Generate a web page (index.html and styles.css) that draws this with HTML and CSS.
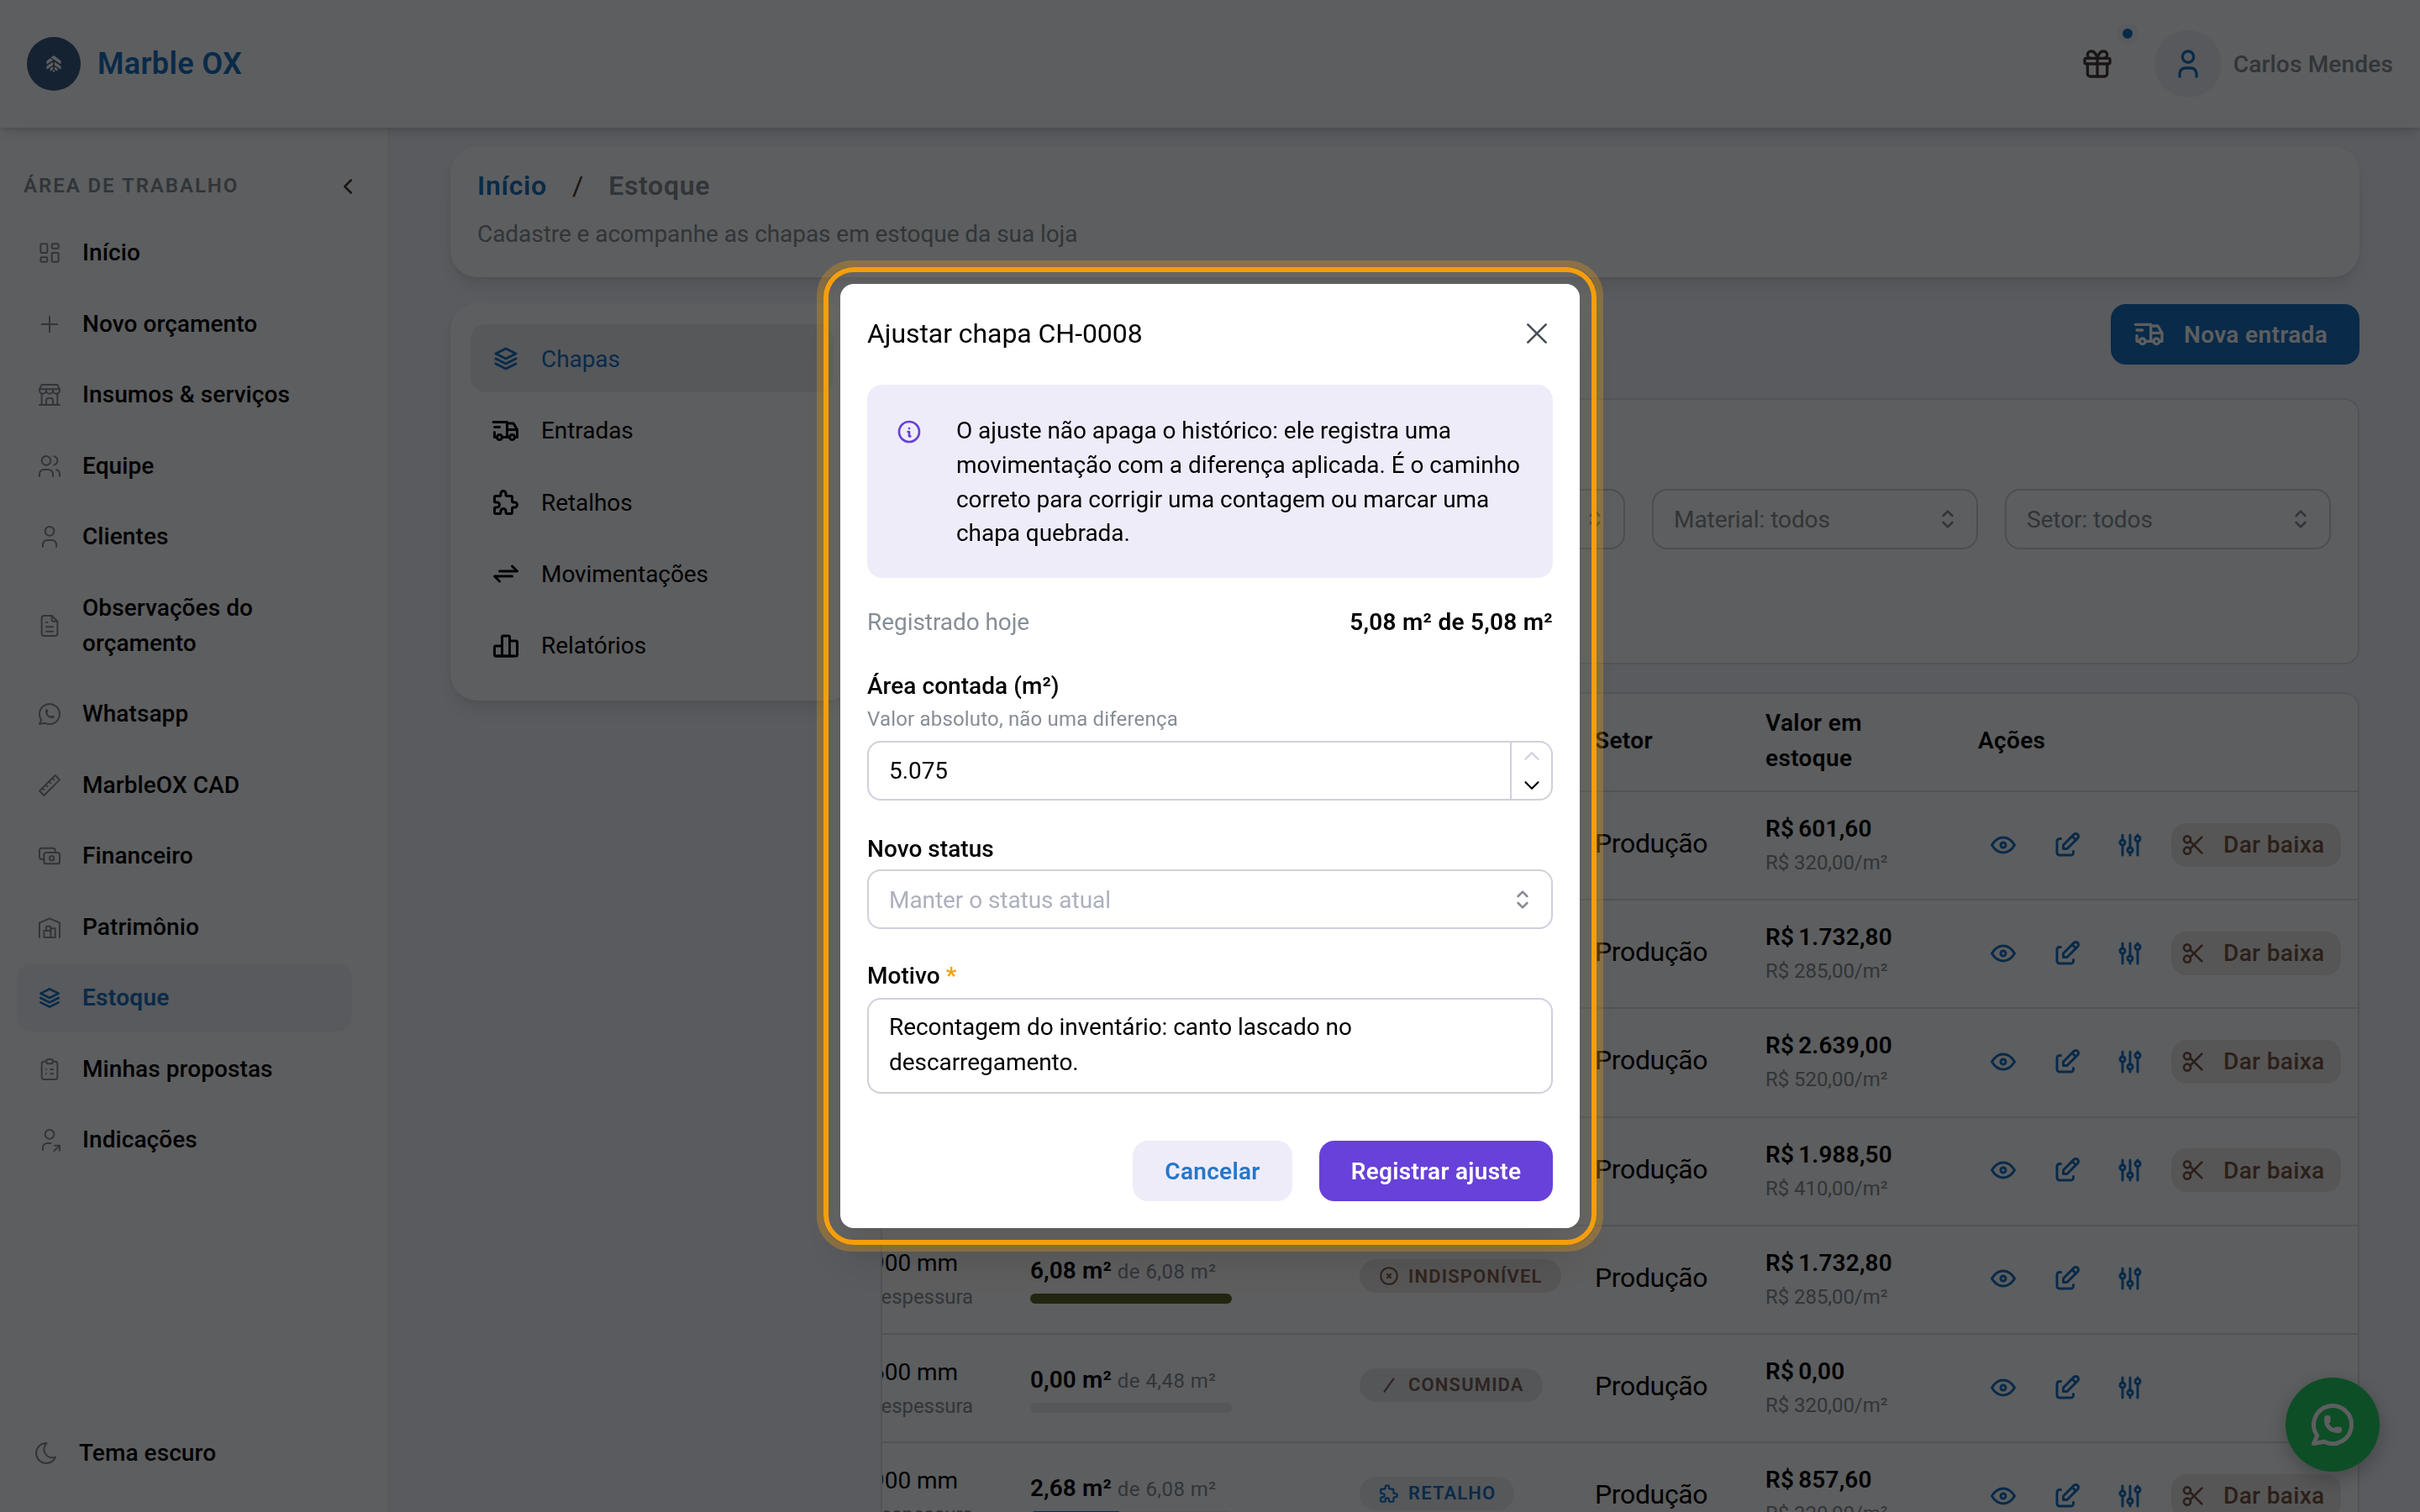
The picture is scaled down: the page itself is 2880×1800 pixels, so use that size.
FILE: index.html
```html
<!DOCTYPE html>
<html lang="pt-BR">
<head>
    <meta charset="UTF-8">
    <meta name="viewport" content="width=device-width, initial-scale=1.0">
    <title>Estoque - Marble OX</title>
    <link rel="stylesheet" href="styles.css">
</head>
<body>
    <!-- Icon set -->
    <svg class="sprite" aria-hidden="true">
        <symbol id="i-dashboard" viewBox="0 0 24 24"><path d="M5 4h4a1 1 0 0 1 1 1v6a1 1 0 0 1 -1 1h-4a1 1 0 0 1 -1 -1v-6a1 1 0 0 1 1 -1"/><path d="M5 16h4a1 1 0 0 1 1 1v2a1 1 0 0 1 -1 1h-4a1 1 0 0 1 -1 -1v-2a1 1 0 0 1 1 -1"/><path d="M15 12h4a1 1 0 0 1 1 1v6a1 1 0 0 1 -1 1h-4a1 1 0 0 1 -1 -1v-6a1 1 0 0 1 1 -1"/><path d="M15 4h4a1 1 0 0 1 1 1v2a1 1 0 0 1 -1 1h-4a1 1 0 0 1 -1 -1v-2a1 1 0 0 1 1 -1"/></symbol>
        <symbol id="i-plus" viewBox="0 0 24 24"><path d="M12 5v14M5 12h14"/></symbol>
        <symbol id="i-store" viewBox="0 0 24 24"><path d="M3 21h18"/><path d="M3 7v1a3 3 0 0 0 6 0v-1m0 1a3 3 0 0 0 6 0v-1m0 1a3 3 0 0 0 6 0v-1h-18l2 -4h14l2 4"/><path d="M5 21v-10.15M19 21v-10.15"/><path d="M9 21v-4a2 2 0 0 1 2 -2h2a2 2 0 0 1 2 2v4"/></symbol>
        <symbol id="i-users" viewBox="0 0 24 24"><path d="M5 7a4 4 0 1 0 8 0a4 4 0 1 0 -8 0"/><path d="M3 21v-2a4 4 0 0 1 4 -4h4a4 4 0 0 1 4 4v2"/><path d="M16 3.13a4 4 0 0 1 0 7.75"/><path d="M21 21v-2a4 4 0 0 0 -3 -3.85"/></symbol>
        <symbol id="i-user" viewBox="0 0 24 24"><path d="M8 7a4 4 0 1 0 8 0a4 4 0 0 0 -8 0"/><path d="M6 21v-2a4 4 0 0 1 4 -4h4a4 4 0 0 1 4 4v2"/></symbol>
        <symbol id="i-file" viewBox="0 0 24 24"><path d="M14 3v4a1 1 0 0 0 1 1h4"/><path d="M17 21h-10a2 2 0 0 1 -2 -2v-14a2 2 0 0 1 2 -2h7l5 5v11a2 2 0 0 1 -2 2z"/><path d="M9 9h1M9 13h6M9 17h6"/></symbol>
        <symbol id="i-whatsapp" viewBox="0 0 24 24"><path d="M3 21l1.65 -3.8a9 9 0 1 1 3.4 2.9l-5.05 .9"/><path d="M9 10a.5 .5 0 0 0 1 0v-1a.5 .5 0 0 0 -1 0v1a5 5 0 0 0 5 5h1a.5 .5 0 0 0 0 -1h-1a.5 .5 0 0 0 0 1"/></symbol>
        <symbol id="i-ruler" viewBox="0 0 24 24"><path d="M17 3l4 4l-14 14l-4 -4z"/><path d="M16 7l-1.5 -1.5M13 10l-1.5 -1.5M10 13l-1.5 -1.5M7 16l-1.5 -1.5"/></symbol>
        <symbol id="i-cash" viewBox="0 0 24 24"><path d="M7 11a2 2 0 0 1 2 -2h10a2 2 0 0 1 2 2v6a2 2 0 0 1 -2 2h-10a2 2 0 0 1 -2 -2z"/><path d="M12 14a2 2 0 1 0 4 0a2 2 0 1 0 -4 0"/><path d="M17 9v-2a2 2 0 0 0 -2 -2h-10a2 2 0 0 0 -2 2v6a2 2 0 0 0 2 2h2"/></symbol>
        <symbol id="i-warehouse" viewBox="0 0 24 24"><path d="M3 21v-13l9 -4l9 4v13"/><path d="M13 13h4v8h-10v-6h6"/><path d="M13 21v-9a1 1 0 0 0 -1 -1h-2a1 1 0 0 0 -1 1v3"/></symbol>
        <symbol id="i-stack" viewBox="0 0 24 24"><path d="M12 4l-8 4l8 4l8 -4l-8 -4"/><path d="M4 12l8 4l8 -4"/><path d="M4 16l8 4l8 -4"/></symbol>
        <symbol id="i-clipboard" viewBox="0 0 24 24"><path d="M9 5h-2a2 2 0 0 0 -2 2v12a2 2 0 0 0 2 2h10a2 2 0 0 0 2 -2v-12a2 2 0 0 0 -2 -2h-2"/><path d="M9 5a2 2 0 0 1 2 -2h2a2 2 0 0 1 0 4h-2a2 2 0 0 1 -2 -2z"/><path d="M9 12h.01M13 12h2M9 16h.01M13 16h2"/></symbol>
        <symbol id="i-share" viewBox="0 0 24 24"><path d="M8 7a4 4 0 1 0 8 0a4 4 0 0 0 -8 0"/><path d="M6 21v-2a4 4 0 0 1 4 -4h3"/><path d="M16 22l5 -5"/><path d="M21 21.5v-4.5h-4.5"/></symbol>
        <symbol id="i-moon" viewBox="0 0 24 24"><path d="M12 3c.132 0 .263 0 .393 0a7.5 7.5 0 0 0 7.92 12.446a9 9 0 1 1 -8.313 -12.454z"/></symbol>
        <symbol id="i-truck" viewBox="0 0 24 24"><path d="M5 17a2 2 0 1 0 4 0a2 2 0 1 0 -4 0"/><path d="M15 17a2 2 0 1 0 4 0a2 2 0 1 0 -4 0"/><path d="M5 17h-2v-4m-1 -8h11v12m-4 0h6m4 0h2v-6h-8m0 -5h5l3 5"/><path d="M3 9h4"/></symbol>
        <symbol id="i-puzzle" viewBox="0 0 24 24"><path d="M4 7h3a1 1 0 0 0 1 -1v-1a2 2 0 0 1 4 0v1a1 1 0 0 0 1 1h3a1 1 0 0 1 1 1v3a1 1 0 0 0 1 1h1a2 2 0 0 1 0 4h-1a1 1 0 0 0 -1 1v3a1 1 0 0 1 -1 1h-3a1 1 0 0 1 -1 -1v-1a2 2 0 0 0 -4 0v1a1 1 0 0 1 -1 1h-3a1 1 0 0 1 -1 -1v-3a1 1 0 0 1 1 -1h1a2 2 0 0 0 0 -4h-1a1 1 0 0 1 -1 -1v-3a1 1 0 0 1 1 -1"/></symbol>
        <symbol id="i-exchange" viewBox="0 0 24 24"><path d="M7 10h14l-4 -4"/><path d="M17 14h-14l4 4"/></symbol>
        <symbol id="i-chart" viewBox="0 0 24 24"><path d="M3 13a1 1 0 0 1 1 -1h4a1 1 0 0 1 1 1v6a1 1 0 0 1 -1 1h-4a1 1 0 0 1 -1 -1z"/><path d="M15 9a1 1 0 0 1 1 -1h4a1 1 0 0 1 1 1v10a1 1 0 0 1 -1 1h-4a1 1 0 0 1 -1 -1z"/><path d="M9 5a1 1 0 0 1 1 -1h4a1 1 0 0 1 1 1v14a1 1 0 0 1 -1 1h-4a1 1 0 0 1 -1 -1z"/><path d="M4 20h14"/></symbol>
        <symbol id="i-gift" viewBox="0 0 24 24"><path d="M3 9a1 1 0 0 1 1 -1h16a1 1 0 0 1 1 1v2a1 1 0 0 1 -1 1h-16a1 1 0 0 1 -1 -1z"/><path d="M12 8v13"/><path d="M19 12v7a2 2 0 0 1 -2 2h-10a2 2 0 0 1 -2 -2v-7"/><path d="M7.5 8a2.5 2.5 0 0 1 0 -5a4.8 8 0 0 1 4.5 5a4.8 8 0 0 1 4.5 -5a2.5 2.5 0 0 1 0 5"/></symbol>
        <symbol id="i-eye" viewBox="0 0 24 24"><path d="M10 12a2 2 0 1 0 4 0a2 2 0 0 0 -4 0"/><path d="M21 12c-2.4 4 -5.4 6 -9 6c-3.6 0 -6.6 -2 -9 -6c2.4 -4 5.4 -6 9 -6c3.6 0 6.6 2 9 6"/></symbol>
        <symbol id="i-edit" viewBox="0 0 24 24"><path d="M7 7h-1a2 2 0 0 0 -2 2v9a2 2 0 0 0 2 2h9a2 2 0 0 0 2 -2v-1"/><path d="M20.385 6.585a2.1 2.1 0 0 0 -2.97 -2.97l-8.415 8.385v3h3l8.385 -8.415z"/><path d="M16 5l3 3"/></symbol>
        <symbol id="i-adjust" viewBox="0 0 24 24"><path d="M4 10a2 2 0 1 0 4 0a2 2 0 0 0 -4 0"/><path d="M6 4v4M6 12v8"/><path d="M10 16a2 2 0 1 0 4 0a2 2 0 0 0 -4 0"/><path d="M12 4v10M12 18v2"/><path d="M16 7a2 2 0 1 0 4 0a2 2 0 0 0 -4 0"/><path d="M18 4v1M18 9v11"/></symbol>
        <symbol id="i-scissors" viewBox="0 0 24 24"><path d="M3 7a3 3 0 1 0 6 0a3 3 0 1 0 -6 0"/><path d="M3 17a3 3 0 1 0 6 0a3 3 0 1 0 -6 0"/><path d="M8.6 8.6l10.4 10.4"/><path d="M8.6 15.4l10.4 -10.4"/></symbol>
        <symbol id="i-circlex" viewBox="0 0 24 24"><path d="M3 12a9 9 0 1 0 18 0a9 9 0 1 0 -18 0"/><path d="M10 10l4 4m0 -4l-4 4"/></symbol>
        <symbol id="i-slash" viewBox="0 0 24 24"><path d="M17 5l-10 14"/></symbol>
        <symbol id="i-info" viewBox="0 0 24 24"><path d="M3 12a9 9 0 1 0 18 0a9 9 0 0 0 -18 0"/><path d="M12 9h.01"/><path d="M11 12h1v4h1"/></symbol>
        <symbol id="i-selector" viewBox="0 0 24 24"><path d="M8 9l4 -4l4 4"/><path d="M16 15l-4 4l-4 -4"/></symbol>
        <symbol id="i-left" viewBox="0 0 24 24"><path d="M15 6l-6 6l6 6"/></symbol>
        <symbol id="i-up" viewBox="0 0 24 24"><path d="M6 15l6 -6l6 6"/></symbol>
        <symbol id="i-down" viewBox="0 0 24 24"><path d="M6 9l6 6l6 -6"/></symbol>
        <symbol id="i-close" viewBox="0 0 24 24"><path d="M4 4l16 16M20 4l-16 16"/></symbol>
    </svg>

    <header class="topbar">
        <div class="brand">
            <div class="brand-logo">
                <svg viewBox="0 0 18 20"><path d="M9 0l8.5 6.4v4.2L5.6 2.6z"/><path d="M4.8 3.2l3.4 2.3L.5 10.8V6.4z"/><path d="M8.2 7.6v4L.5 17v-4.2z"/><path d="M9.8 7.6v4l7.7 5.4v-4.2z"/><path d="M8.2 13.2v3.4L4.6 19v-3.4zM9.8 13.2v3.4l3.6 2.4v-3.4z"/><path d="M9 17.2l1.6 1.3L9 20l-1.6-1.5z"/></svg>
            </div>
            <span class="brand-name">Marble OX</span>
        </div>
        <div class="user-area">
            <div class="gift">
                <svg class="icon"><use href="#i-gift"/></svg>
                <span class="gift-dot"></span>
            </div>
            <div class="avatar"><svg class="icon"><use href="#i-user"/></svg></div>
            <span class="user-name">Carlos Mendes</span>
        </div>
    </header>

    <div class="shell">
        <nav class="sidebar">
            <div class="sidebar-title">
                <span>ÁREA DE TRABALHO</span>
                <svg class="icon"><use href="#i-left"/></svg>
            </div>
            <a class="nav-link"><svg class="icon"><use href="#i-dashboard"/></svg><span>Início</span></a>
            <a class="nav-link"><svg class="icon"><use href="#i-plus"/></svg><span>Novo orçamento</span></a>
            <a class="nav-link"><svg class="icon"><use href="#i-store"/></svg><span>Insumos &amp; serviços</span></a>
            <a class="nav-link"><svg class="icon"><use href="#i-users"/></svg><span>Equipe</span></a>
            <a class="nav-link"><svg class="icon"><use href="#i-user"/></svg><span>Clientes</span></a>
            <a class="nav-link"><svg class="icon"><use href="#i-file"/></svg><span>Observações do<br>orçamento</span></a>
            <a class="nav-link"><svg class="icon"><use href="#i-whatsapp"/></svg><span>Whatsapp</span></a>
            <a class="nav-link"><svg class="icon"><use href="#i-ruler"/></svg><span>MarbleOX CAD</span></a>
            <a class="nav-link"><svg class="icon"><use href="#i-cash"/></svg><span>Financeiro</span></a>
            <a class="nav-link"><svg class="icon"><use href="#i-warehouse"/></svg><span>Patrimônio</span></a>
            <a class="nav-link active"><svg class="icon"><use href="#i-stack"/></svg><span>Estoque</span></a>
            <a class="nav-link"><svg class="icon"><use href="#i-clipboard"/></svg><span>Minhas propostas</span></a>
            <a class="nav-link"><svg class="icon"><use href="#i-share"/></svg><span>Indicações</span></a>
            <a class="nav-link theme-link"><svg class="icon"><use href="#i-moon"/></svg><span>Tema escuro</span></a>
        </nav>

        <main class="content">
            <div class="page-card">
                <div class="breadcrumb">
                    <a>Início</a>
                    <span class="sep">/</span>
                    <span>Estoque</span>
                </div>
                <p>Cadastre e acompanhe as chapas em estoque da sua loja</p>
            </div>

            <div class="columns">
                <div class="tabs">
                    <a class="tab active"><svg class="icon"><use href="#i-stack"/></svg>Chapas</a>
                    <a class="tab"><svg class="icon"><use href="#i-truck"/></svg>Entradas</a>
                    <a class="tab"><svg class="icon"><use href="#i-puzzle"/></svg>Retalhos</a>
                    <a class="tab"><svg class="icon"><use href="#i-exchange"/></svg>Movimentações</a>
                    <a class="tab"><svg class="icon"><use href="#i-chart"/></svg>Relatórios</a>
                </div>

                <div class="panel">
                    <button class="btn-new"><svg class="icon"><use href="#i-truck"/></svg>Nova entrada</button>

                    <div class="filters">
                        <div class="select"><span></span><svg class="icon"><use href="#i-selector"/></svg></div>
                        <div class="select"><span>Material: todos</span><svg class="icon"><use href="#i-selector"/></svg></div>
                        <div class="select"><span>Setor: todos</span><svg class="icon"><use href="#i-selector"/></svg></div>
                    </div>

                    <div class="table">
                        <div class="row head">
                            <div></div>
                            <div></div>
                            <div></div>
                            <div>Setor</div>
                            <div>Valor em<br>estoque</div>
                            <div>Ações</div>
                        </div>
                        <div id="rows"></div>
                    </div>
                </div>
            </div>
        </main>
    </div>

    <div class="fab"><svg class="icon"><use href="#i-whatsapp"/></svg></div>

    <div class="overlay"></div>

    <div class="modal">
        <div class="modal-head">
            <h2>Ajustar chapa CH-0008</h2>
            <svg class="icon"><use href="#i-close"/></svg>
        </div>
        <div class="alert">
            <svg class="icon"><use href="#i-info"/></svg>
            <p>O ajuste não apaga o histórico: ele registra uma movimentação com a diferença aplicada. É o caminho correto para corrigir uma contagem ou marcar uma chapa quebrada.</p>
        </div>
        <div class="current">
            <span>Registrado hoje</span>
            <strong>5,08 m² de 5,08 m²</strong>
        </div>
        <div class="field field-area">
            <label>Área contada (m²)</label>
            <small>Valor absoluto, não uma diferença</small>
            <div class="input number">
                <span>5.075</span>
                <div class="stepper">
                    <svg class="icon off"><use href="#i-up"/></svg>
                    <svg class="icon"><use href="#i-down"/></svg>
                </div>
            </div>
        </div>
        <div class="field">
            <label>Novo status</label>
            <div class="input"><span class="placeholder">Manter o status atual</span><svg class="icon"><use href="#i-selector"/></svg></div>
        </div>
        <div class="field">
            <label>Motivo <em>*</em></label>
            <div class="input textarea">Recontagem do inventário: canto lascado no descarregamento.</div>
        </div>
        <div class="modal-actions">
            <button class="btn btn-light">Cancelar</button>
            <button class="btn btn-primary">Registrar ajuste</button>
        </div>
    </div>

    <script>
        const slabs = [
            { value: '601,60', price: '320,00', cut: true },
            { value: '1.732,80', price: '285,00', cut: true },
            { value: '2.639,00', price: '520,00', cut: true },
            { value: '1.988,50', price: '410,00', cut: true },
            { value: '1.732,80', price: '285,00', size: '900', area: '6,08', total: '6,08', status: 'Indisponível', kind: 'blocked', icon: 'circlex' },
            { value: '0,00', price: '320,00', size: '600', area: '0,00', total: '4,48', status: 'Consumida', kind: 'used', icon: 'slash' },
            { value: '857,60', price: '320,00', size: '900', area: '2,68', total: '6,08', status: 'Retalho', kind: 'scrap', icon: 'puzzle', cut: true }
        ];

        function icon(name) {
            return `<svg class="icon"><use href="#i-${name}"/></svg>`;
        }

        function percent(slab) {
            return parseFloat(slab.area.replace(',', '.')) / parseFloat(slab.total.replace(',', '.')) * 100;
        }

        document.getElementById('rows').innerHTML = slabs.map(s => `
            <div class="row">
                <div class="size">${s.size ? `<span>${s.size} mm</span><small>espessura</small>` : ''}</div>
                <div class="area">${s.area ? `<b>${s.area} m²</b> <small>de ${s.total} m²</small>
                    <div class="bar ${s.kind}"><i style="width: ${percent(s)}%"></i></div>` : ''}</div>
                <div class="status">${s.status ? `<span class="badge ${s.kind}">${icon(s.icon)}${s.status}</span>` : ''}</div>
                <div class="sector">Produção</div>
                <div class="value"><b>R$ ${s.value}</b><small>R$ ${s.price}/m²</small></div>
                <div class="actions">
                    <a>${icon('eye')}</a><a>${icon('edit')}</a><a>${icon('adjust')}</a>
                    ${s.cut ? `<button class="btn-cut">${icon('scissors')}Dar baixa</button>` : ''}
                </div>
            </div>`).join('');
    </script>
</body>
</html>
```
FILE: styles.css
```css
* {
    box-sizing: border-box;
}
body {
    margin: 0;
    height: 1800px;
    overflow: hidden;
    font-family: Roboto, "Liberation Sans", sans-serif;
    font-size: 28px;
    line-height: 43px;
    letter-spacing: -0.06px;
    color: #000;
    background-color: #f4f7fc;
}
button {
    font-family: inherit;
    border: 0;
}
.sprite {
    display: none;
}
.icon {
    width: 32px;
    height: 32px;
    flex-shrink: 0;
    fill: none;
    stroke: currentColor;
    stroke-width: 2;
    stroke-linecap: round;
    stroke-linejoin: round;
}

/* Top bar */
.topbar {
    position: relative;
    z-index: 2;
    height: 152px;
    padding: 0 32px 0 32px;
    display: flex;
    align-items: center;
    justify-content: space-between;
    background-color: #fff;
    box-shadow: 0 2px 6px rgba(0, 0, 0, 0.1), 0 10px 14px -4px rgba(0, 0, 0, 0.12);
}
.brand {
    display: flex;
    align-items: center;
    gap: 20px;
}
.brand-logo {
    width: 64px;
    height: 64px;
    border-radius: 50%;
    background-color: #3a5a84;
    display: flex;
    align-items: center;
    justify-content: center;
}
.brand-logo svg {
    width: 18px;
    height: 20px;
    fill: #fff;
}
.brand-name {
    font-size: 36px;
    font-weight: 600;
    letter-spacing: 0.35px;
    color: #1971c2;
}
.user-area {
    display: flex;
    align-items: center;
}
.gift {
    position: relative;
    display: flex;
    margin-right: 48px;
    color: #453a34;
}
.gift .icon, .avatar .icon {
    width: 40px;
    height: 40px;
}
.gift-dot {
    position: absolute;
    top: -29px;
    left: 43px;
    width: 26px;
    height: 26px;
    border-radius: 50%;
    border: 7px solid #f5f6f8;
    background-color: #1971c2;
}
.avatar {
    width: 80px;
    height: 80px;
    margin-right: 14px;
    border-radius: 50%;
    background-color: #f0f2f6;
    color: #1971c2;
    display: flex;
    align-items: center;
    justify-content: center;
}
.user-name {
    font-weight: 500;
    letter-spacing: 0.18px;
    color: #868e96;
}

/* Sidebar */
.shell {
    display: flex;
    height: 1648px;
}
.sidebar {
    width: 464px;
    padding: 48px 43px 31px 20px;
    display: flex;
    flex-direction: column;
    gap: 4px;
    background-color: #fff;
    border-right: 2px solid #eef0f4;
}
.sidebar-title {
    display: flex;
    align-items: center;
    justify-content: space-between;
    padding: 0 0 0 8px;
    margin-bottom: 13px;
    font-size: 24px;
    font-weight: 600;
    letter-spacing: 1.95px;
    color: #868e96;
}
.sidebar-title .icon {
    width: 30px;
    height: 30px;
    color: #453a34;
    margin-right: -10px;
}
.nav-link {
    display: flex;
    align-items: center;
    gap: 23px;
    padding: 20px 23px 18.5px;
    border-radius: 18px;
    font-weight: 500;
    letter-spacing: 0.08px;
    line-height: 42px;
}
.nav-link .icon {
    stroke-width: 1.5;
    color: #868e96;
}
.nav-link.active {
    color: #1971c2;
    font-weight: 600;
    letter-spacing: 0.3px;
    background-color: #f2f5fa;
}
.nav-link.active .icon {
    stroke-width: 2;
    color: #1971c2;
}
.theme-link {
    margin-top: auto;
    padding-left: 19px;
}

/* Page */
.content {
    flex: 1;
    padding: 22px 72px 0;
}
.page-card {
    height: 156px;
    padding: 22px 32px;
    margin-bottom: 31px;
    border-radius: 32px;
    background-color: #fff;
    box-shadow: 0 2px 6px rgba(0, 0, 0, 0.05), 0 14px 24px -4px rgba(0, 0, 0, 0.1);
}
.page-card p {
    margin: 0;
    line-height: 43px;
    color: #868e96;
    padding-top: 11px;
}
.breadcrumb {
    display: flex;
    font-size: 32px;
    line-height: 50px;
    font-weight: 600;
    letter-spacing: 0.7px;
    color: #868e96;
}
.breadcrumb a {
    color: #1971c2;
}
.breadcrumb .sep {
    margin: 0 30px;
    font-weight: 400;
    letter-spacing: 0;
    color: #453a34;
}
.columns {
    display: flex;
    align-items: flex-start;
    gap: 32px;
}
.tabs {
    width: 480px;
    height: 473px;
    padding: 25px 24px;
    display: flex;
    flex-direction: column;
    gap: 4px;
    border-radius: 32px;
    background-color: #fff;
    box-shadow: 0 2px 6px rgba(0, 0, 0, 0.05), 0 14px 24px -4px rgba(0, 0, 0, 0.1);
}
.tab {
    display: flex;
    align-items: center;
    gap: 24px;
    height: 82px;
    padding: 1px 24px 0;
    border-radius: 18px;
}
.tab .icon {
    width: 36px;
    height: 36px;
}
.tab.active {
    color: #1971c2;
    background-color: #eeeff2;
}
.panel {
    flex: 1;
    display: flex;
    flex-direction: column;
}
.btn-new {
    align-self: flex-end;
    width: 296px;
    height: 72px;
    margin: 1px 0 40px;
    padding: 0 26px;
    display: flex;
    align-items: center;
    gap: 21px;
    border-radius: 18px;
    font-size: 28px;
    font-weight: 600;
    letter-spacing: 0.35px;
    color: #fff;
    background-color: #1971c2;
}
.btn-new .icon {
    width: 40px;
    height: 40px;
}
.filters {
    height: 317px;
    margin-bottom: 33px;
    padding: 106px 32px 0 0;
    display: flex;
    justify-content: flex-end;
    gap: 32px;
    border: 2px solid #dee2e6;
    border-radius: 18px;
    background-color: #fff;
}
.select {
    width: 388px;
    height: 72px;
    padding: 0 18px 0 24px;
    display: flex;
    align-items: center;
    justify-content: space-between;
    border: 2px solid #ced4da;
    border-radius: 18px;
    color: #868e96;
}

/* Slab table */
.table {
    height: 1000px;
    overflow: hidden;
    border: 2px solid #dee2e6;
    border-radius: 18px 18px 0 0;
    background-color: #fff;
}
.row {
    display: grid;
    grid-template-columns: 176px 392px 280px 203px 253px 1fr;
    align-items: center;
    height: 129.2px;
    border-bottom: 2px solid #dee2e6;
}
.row.head {
    height: 117px;
    padding-bottom: 3px;
    font-weight: 600;
    letter-spacing: 0.35px;
    line-height: 42px;
}
.row small {
    font-size: 24px;
    color: #868e96;
}
.size {
    display: flex;
    flex-direction: column;
    align-items: flex-end;
    padding: 2px 68px 0 0;
    line-height: 40px;
    overflow: hidden;
    white-space: nowrap;
}
.size span {
    margin-right: 18px;
}
.area {
    line-height: 40px;
    padding-bottom: 1px;
}
.area b {
    font-weight: 600;
    letter-spacing: 0.1px;
}
.area small {
    letter-spacing: 0.45px;
}
.bar {
    width: 240px;
    height: 12px;
    margin-top: 6px;
    border-radius: 6px;
    overflow: hidden;
    background-color: #e9ecef;
}
.bar i {
    display: block;
    height: 12px;
    background-color: #1971c2;
}
.bar.blocked i {
    background-color: #5f6529;
}
.status {
    padding-bottom: 3px;
}
.badge {
    display: inline-flex;
    align-items: center;
    gap: 10px;
    height: 40px;
    padding: 0 22px;
    border-radius: 20px;
    font-size: 22px;
    font-weight: 600;
    letter-spacing: 1.15px;
    text-transform: uppercase;
}
.badge .icon {
    width: 26px;
    height: 26px;
}
.badge.blocked {
    color: #85604a;
    background-color: #eae8e8;
}
.badge.used {
    color: #7a6058;
    background-color: #eae9ea;
}
.badge.scrap {
    color: #1971c2;
    background-color: #eceef2;
}
.sector {
    font-size: 32px;
    letter-spacing: -0.35px;
    padding-bottom: 4px;
}
.value {
    display: flex;
    flex-direction: column;
    line-height: 41px;
    padding-top: 1px;
}
.value b {
    font-weight: 600;
    letter-spacing: 0.15px;
    word-spacing: -2px;
}
.actions {
    display: flex;
    gap: 15.5px;
    padding-bottom: 2px;
}
.actions a {
    width: 60px;
    height: 52px;
    display: flex;
    align-items: center;
    justify-content: center;
    color: #1971c2;
}
.actions a .icon {
    width: 36px;
    height: 36px;
}
.btn-cut {
    width: 202px;
    height: 52px;
    margin-left: 3.5px;
    padding: 0 11px;
    display: flex;
    align-items: center;
    gap: 19px;
    border-radius: 18px;
    font-size: 28px;
    font-weight: 500;
    letter-spacing: 0.35px;
    color: #785440;
    background-color: #ebe9e9;
}
.fab {
    position: fixed;
    right: 48px;
    bottom: 48px;
    width: 112px;
    height: 112px;
    border-radius: 50%;
    display: flex;
    align-items: center;
    justify-content: center;
    color: #fff;
    background-color: #25d366;
    box-shadow: 0 8px 24px rgba(0, 0, 0, 0.25);
}
.fab .icon {
    width: 60px;
    height: 60px;
}

/* Modal */
.overlay {
    position: fixed;
    inset: 0;
    z-index: 5;
    background-color: rgba(0, 1, 3, 0.637);
}
.modal {
    position: fixed;
    z-index: 6;
    top: 338px;
    left: 1000px;
    width: 880px;
    height: 1124px;
    padding: 32px;
    border-radius: 16px;
    background-color: #fff;
    outline: 6px solid #f59e0b;
    outline-offset: 14px;
    box-shadow: 0 0 0 14px rgba(125, 125, 120, 0.25), 0 40px 50px -10px rgba(0, 0, 0, 0.15);
}
.modal::before {
    content: "";
    position: absolute;
    inset: -28px;
    border: 8px solid rgba(245, 158, 11, 0.3);
    border-radius: 42px;
}
.modal-head {
    display: flex;
    align-items: center;
    justify-content: space-between;
    height: 54px;
    margin-bottom: 34px;
}
.modal-head h2 {
    margin: 0;
    font-size: 32px;
    font-weight: 400;
}
.modal-head .icon {
    margin-right: 3px;
    color: #495057;
}
.alert {
    display: flex;
    gap: 40px;
    height: 230px;
    padding: 35px 34px;
    border-radius: 18px;
    background-color: #efecfa;
}
.alert .icon {
    margin-top: 5px;
    color: #6741d9;
}
.alert p {
    margin: 0;
    line-height: 40.8px;
}
.current {
    display: flex;
    justify-content: space-between;
    margin: 31px 0 33px;
    color: #868e96;
}
.current strong {
    font-weight: 600;
    letter-spacing: 0.25px;
    color: #000;
}
.field {
    margin-bottom: 34px;
}
.field label {
    display: block;
    height: 46px;
    font-weight: 500;
    letter-spacing: 0.05px;
}
.field em {
    font-style: normal;
    font-weight: 600;
    color: #f59e0b;
}
.field small {
    display: block;
    margin: -6px 0 5px;
    line-height: 42px;
    font-size: 24px;
    letter-spacing: 0.18px;
    color: #868e96;
}
.input {
    display: flex;
    align-items: center;
    justify-content: space-between;
    height: 71px;
    padding: 1px 18px 0 24px;
    border: 2px solid #ced0dc;
    border-radius: 16px;
}
.input .icon {
    color: #868e96;
}
.input .placeholder {
    color: #adb1bd;
}
.number {
    padding: 0 0 0 24px;
}
.field-area {
    margin-bottom: 36px;
}
.stepper {
    width: 49px;
    height: 67px;
    padding-left: 1px;
    display: flex;
    flex-direction: column;
    align-items: center;
    justify-content: space-between;
    border-left: 2px solid #ced0dc;
}
.stepper .icon {
    color: #000;
    width: 30px;
    height: 32px;
    stroke-width: 1.7;
}
.stepper .off {
    color: #ced0dc;
}
.textarea {
    display: block;
    height: 114px;
    line-height: 42px;
    margin-top: 2px;
    padding: 12px 180px 0 24px;
}
.modal-actions {
    display: flex;
    justify-content: flex-end;
    gap: 32px;
    margin-top: 56px;
}
.btn {
    height: 72px;
    border-radius: 18px;
    font-size: 28px;
    font-weight: 600;
    letter-spacing: 0.28px;
}
.btn-light {
    width: 190px;
    color: #2577c8;
    background-color: #efecfa;
}
.btn-primary {
    width: 278px;
    color: #fff;
    background-color: #6741d9;
}
```
